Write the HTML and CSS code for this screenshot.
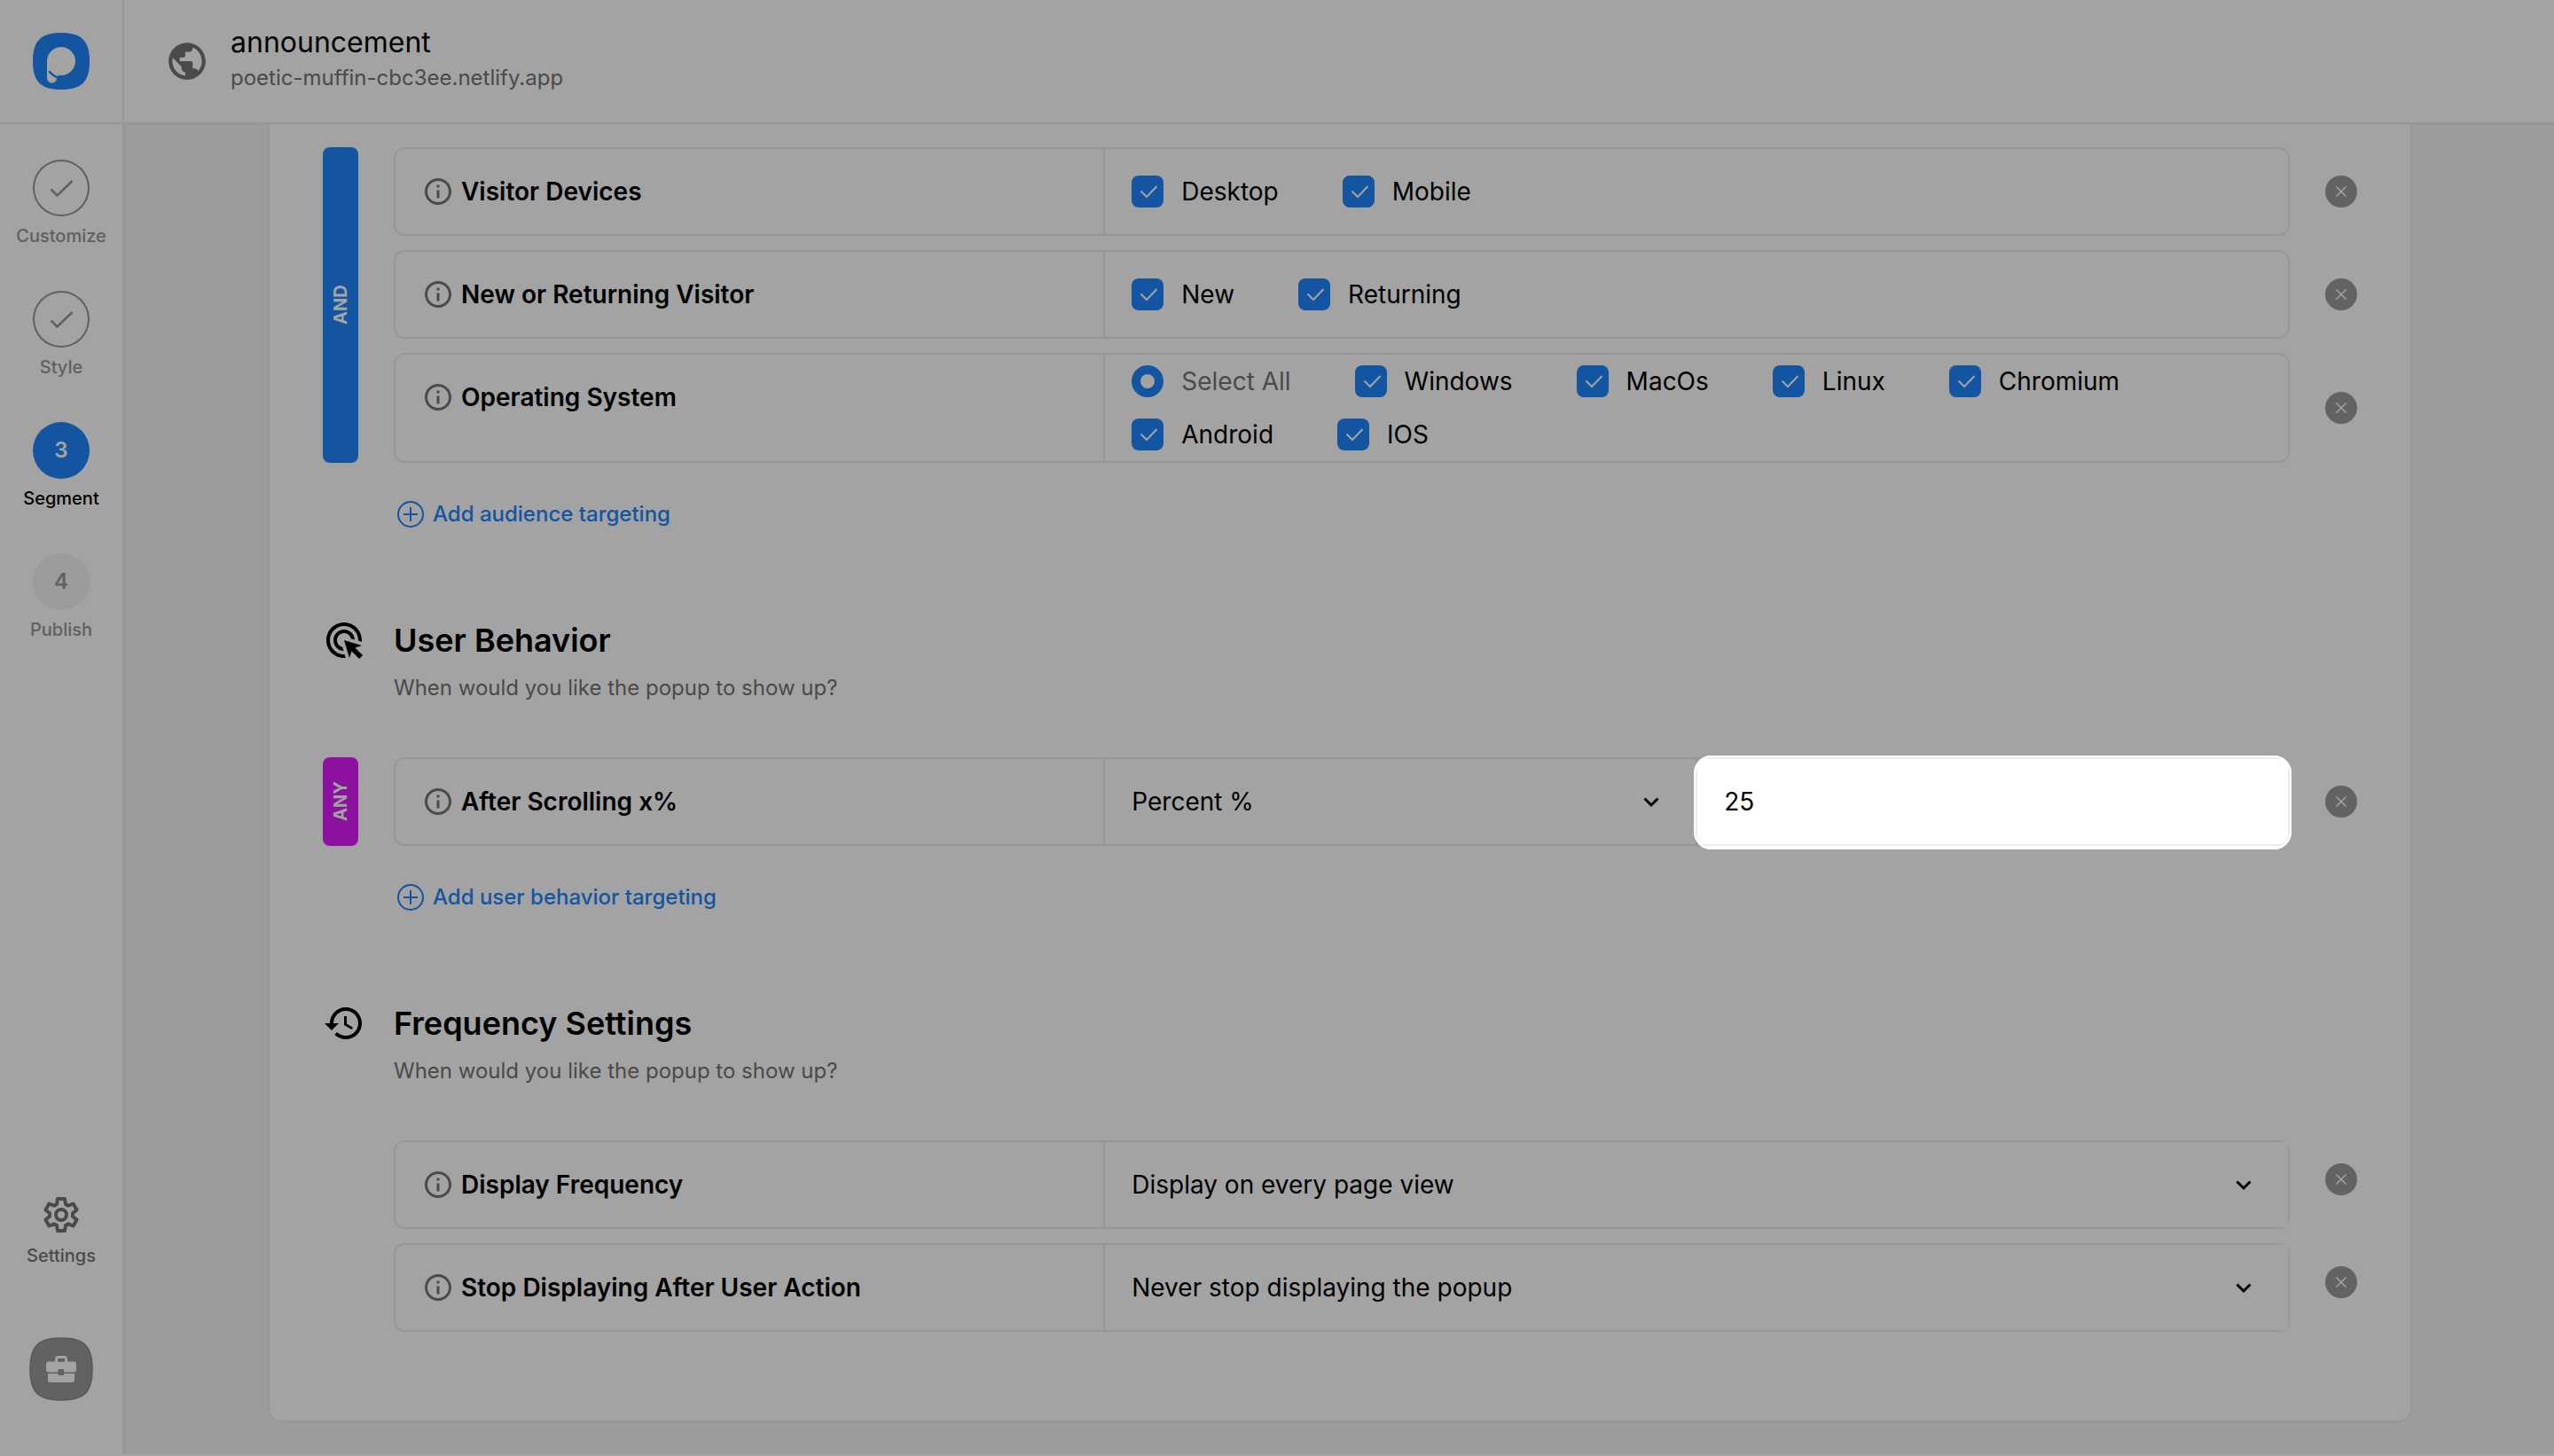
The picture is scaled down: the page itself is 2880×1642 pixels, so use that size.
FILE: index.html
```html
<!DOCTYPE html>
<html lang="en">

<head>
    <meta charset="UTF-8">
    <meta name="viewport" content="width=device-width, initial-scale=1.0">
    <title>announcement - Segment</title>
    <link rel="stylesheet" href="styles.css">
</head>

<body>
    <!-- shared icons -->
    <svg class="sprite" aria-hidden="true">
        <symbol id="info" viewBox="0 0 24 24">
            <path d="M11 7h2v2h-2zm0 4h2v6h-2zm1-9C6.48 2 2 6.48 2 12s4.48 10 10 10 10-4.48 10-10S17.52 2 12 2zm0 18c-4.41 0-8-3.59-8-8s3.59-8 8-8 8 3.59 8 8-3.59 8-8 8z" />
        </symbol>
        <symbol id="plus" viewBox="0 0 30 30">
            <path d="M15 7v16M7 15h16M15 1a14 14 0 1 0 0 28a14 14 0 1 0 0-28z" fill="none" stroke="currentColor" stroke-width="2" />
        </symbol>
        <symbol id="close" viewBox="0 0 36 36">
            <path d="M12.5 12.5l11 11M23.5 12.5l-11 11" fill="none" stroke="currentColor" stroke-width="1.5" />
        </symbol>
        <symbol id="check" viewBox="0 0 64 64">
            <path d="M20.5 33.5l7 7L44.5 24" fill="none" stroke="currentColor" stroke-width="2.5" />
        </symbol>
        <symbol id="chevron" viewBox="0 0 20 20">
            <path d="M2.500 6.500l7.500 7.500l7.500-7.500" fill="none" stroke="currentColor" stroke-width="3" />
        </symbol>
    </svg>

    <div class="app">
        <aside class="sidebar">
            <a href="#" class="logo" aria-label="Home">
                <svg viewBox="0 0 64 64" width="64" height="64">
                    <path d="M32 0C55 0 64 9 64 32S55 64 32 64S0 55 0 32S9 0 32 0z" fill="#1e85fa" />
                    <circle cx="32" cy="32" r="16" fill="#fff" />
                    <path d="M16 32V50C16 54 18 56.500 21.500 56.500C25 56.500 27 54 27 51L30 46z" fill="#fff" />
                    <path d="M19 44Q23 49 30 51" fill="none" stroke="#1e85fa" stroke-width="2.500" stroke-linecap="round" />
                </svg>
            </a>
            <nav class="steps">
                <a href="#" class="step">
                    <span class="step-circle done"><svg width="64" height="64"><use href="#check" /></svg></span>
                    Customize
                </a>
                <a href="#" class="step">
                    <span class="step-circle done"><svg width="64" height="64"><use href="#check" /></svg></span>
                    Style
                </a>
                <a href="#" class="step active">
                    <span class="step-circle">3</span>
                    Segment
                </a>
                <a href="#" class="step">
                    <span class="step-circle">4</span>
                    Publish
                </a>
            </nav>
            <div class="sidebar-bottom">
                <a href="#" class="settings">
                    <svg viewBox="-22 -22 44 44" width="44" height="44" fill="none" stroke="currentColor" stroke-width="4" stroke-linejoin="round">
                        <path d="M-5-12L-4-18H4L5-12L7.900-10.300L13.600-12.500L17.600-5.500L12.900-1.700V1.700L17.600 5.500L13.600 12.500L7.900 10.300L5 12L4 18H-4L-5 12L-7.900 10.300L-13.600 12.500L-17.600 5.500L-12.900 1.700V-1.700L-17.600-5.500L-13.600-12.500L-7.900-10.300z" />
                        <circle r="6" />
                    </svg>
                    Settings
                </a>
                <button type="button" class="toolbox" aria-label="Toolbox">
                    <svg viewBox="0 0 72 72" width="72" height="72">
                        <path d="M36 1C62 1 71 10 71 36S62 71 36 71S1 62 1 36S10 1 36 1z" fill="#999" stroke="#8a8a8a" stroke-width="1.500" />
                        <rect x="30.500" y="22.500" width="11" height="8" rx="2" fill="none" stroke="#fff" stroke-width="3" />
                        <rect x="19" y="27.500" width="34" height="12" rx="3" fill="#fff" />
                        <path d="M21 41h30v7a3 3 0 0 1-3 3h-24a3 3 0 0 1-3-3z" fill="#fff" />
                        <path d="M32.500 36h6.500v7h-6.500zM33 25h6v2.500h-6z" fill="#999" />
                    </svg>
                </button>
            </div>
        </aside>

        <div class="page">
            <header class="topbar">
                <svg viewBox="0 0 24 24" width="50" height="50" fill="#757575">
                    <path d="M12 2C6.480 2 2 6.480 2 12s4.480 10 10 10 10-4.480 10-10S17.520 2 12 2zm-1 17.930c-3.950-.490-7-3.850-7-7.930 0-.620.080-1.210.210-1.790L9 15v1c0 1.100.900 2 2 2v1.930zm6.900-2.540c-.260-.810-1-1.390-1.900-1.390h-1v-3c0-.550-.450-1-1-1H8v-2h2c.550 0 1-.450 1-1V7h2c1.100 0 2-.900 2-2v-.410c2.930 1.190 5 4.060 5 7.410 0 2.080-.800 3.970-2.100 5.390z" />
                </svg>
                <div class="site">
                    <h1>announcement</h1>
                    <p>poetic-muffin-cbc3ee.netlify.app</p>
                </div>
            </header>

            <main class="content">
                <form class="card">
                    <section>
                        <div class="rules">
                            <span class="operator and">AND</span>
                            <div class="rows">
                                <div class="row">
                                    <div class="box">
                                        <div class="name" id="devices"><svg class="info"><use href="#info" /></svg>Visitor Devices</div>
                                        <div class="options" role="group" aria-labelledby="devices">
                                            <label><input type="checkbox" checked>Desktop</label>
                                            <label><input type="checkbox" checked>Mobile</label>
                                        </div>
                                    </div>
                                    <button type="button" class="remove" aria-label="Remove"><svg><use href="#close" /></svg></button>
                                </div>
                                <div class="row">
                                    <div class="box">
                                        <div class="name" id="visitor"><svg class="info"><use href="#info" /></svg>New or Returning Visitor</div>
                                        <div class="options" role="group" aria-labelledby="visitor">
                                            <label><input type="checkbox" checked>New</label>
                                            <label><input type="checkbox" checked>Returning</label>
                                        </div>
                                    </div>
                                    <button type="button" class="remove" aria-label="Remove"><svg><use href="#close" /></svg></button>
                                </div>
                                <div class="row">
                                    <div class="box">
                                        <div class="name" id="system"><svg class="info"><use href="#info" /></svg>Operating System</div>
                                        <div class="options" role="group" aria-labelledby="system">
                                            <label class="muted"><input type="radio" checked>Select All</label>
                                            <label><input type="checkbox" checked>Windows</label>
                                            <label><input type="checkbox" checked>MacOs</label>
                                            <label><input type="checkbox" checked>Linux</label>
                                            <label><input type="checkbox" checked>Chromium</label>
                                            <label><input type="checkbox" checked>Android</label>
                                            <label><input type="checkbox" checked>IOS</label>
                                        </div>
                                    </div>
                                    <button type="button" class="remove" aria-label="Remove"><svg><use href="#close" /></svg></button>
                                </div>
                            </div>
                        </div>
                        <button type="button" class="add"><svg width="30" height="30"><use href="#plus" /></svg>Add audience targeting</button>
                    </section>

                    <section>
                        <div class="section-title">
                            <svg viewBox="0 0 24 24" width="48" height="48">
                                <path d="M11.710 17.990C8.530 17.840 6 15.220 6 12c0-3.310 2.690-6 6-6c3.220 0 5.840 2.530 5.990 5.710l-2.100-.630C15.480 9.310 13.890 8 12 8c-2.210 0-4 1.790-4 4c0 1.890 1.310 3.480 3.080 3.890L11.710 17.990zM22 12c0 .300-.010.600-.040.900l-1.970-.590C20 12.210 20 12.100 20 12c0-4.420-3.580-8-8-8s-8 3.580-8 8s3.580 8 8 8c.100 0 .210 0 .310-.010l.590 1.970C12.600 21.990 12.300 22 12 22C6.480 22 2 17.520 2 12C2 6.480 6.480 2 12 2S22 6.480 22 12zM18.230 16.260L22 15l-10-3l3 10l1.260-3.770l4.270 4.270l1.980-1.980L18.230 16.260z" />
                            </svg>
                            <h2>User Behavior</h2>
                            <p>When would you like the popup to show up?</p>
                        </div>
                        <div class="rules">
                            <span class="operator any">ANY</span>
                            <div class="rows">
                                <div class="row">
                                    <div class="box">
                                        <label class="name" for="scroll-unit"><svg class="info"><use href="#info" /></svg>After Scrolling x%</label>
                                        <div class="fields">
                                            <div class="select">
                                                <select id="scroll-unit">
                                                    <option>Percent %</option>
                                                </select>
                                                <svg class="chevron"><use href="#chevron" /></svg>
                                            </div>
                                            <div class="amount">
                                                <input type="text" value="25" aria-label="Scroll amount">
                                                <span class="spotlight"></span>
                                            </div>
                                        </div>
                                    </div>
                                    <button type="button" class="remove" aria-label="Remove"><svg><use href="#close" /></svg></button>
                                </div>
                            </div>
                        </div>
                        <button type="button" class="add"><svg width="30" height="30"><use href="#plus" /></svg>Add user behavior targeting</button>
                    </section>

                    <section>
                        <div class="section-title">
                            <svg viewBox="0 0 24 24" width="48" height="48">
                                <path d="M13 3c-4.970 0-9 4.030-9 9H1l3.890 3.890.070.140L9 12H6c0-3.870 3.130-7 7-7s7 3.130 7 7-3.130 7-7 7c-1.930 0-3.680-.790-4.940-2.060l-1.420 1.420C8.270 19.990 10.510 21 13 21c4.970 0 9-4.030 9-9s-4.030-9-9-9zm-1 5v5l4.280 2.540.720-1.210-3.500-2.080V8H12z" />
                            </svg>
                            <h2>Frequency Settings</h2>
                            <p>When would you like the popup to show up?</p>
                        </div>
                        <div class="rules">
                            <span class="operator"></span>
                            <div class="rows frequency">
                                <div class="row">
                                    <div class="box">
                                        <label class="name" for="frequency"><svg class="info"><use href="#info" /></svg>Display Frequency</label>
                                        <div class="fields">
                                            <div class="select">
                                                <select id="frequency">
                                                    <option>Display on every page view</option>
                                                </select>
                                                <svg class="chevron"><use href="#chevron" /></svg>
                                            </div>
                                        </div>
                                    </div>
                                    <button type="button" class="remove" aria-label="Remove"><svg><use href="#close" /></svg></button>
                                </div>
                                <div class="row">
                                    <div class="box">
                                        <label class="name" for="stop"><svg class="info"><use href="#info" /></svg>Stop Displaying After User Action</label>
                                        <div class="fields">
                                            <div class="select">
                                                <select id="stop">
                                                    <option>Never stop displaying the popup</option>
                                                </select>
                                                <svg class="chevron"><use href="#chevron" /></svg>
                                            </div>
                                        </div>
                                    </div>
                                    <button type="button" class="remove" aria-label="Remove"><svg><use href="#close" /></svg></button>
                                </div>
                            </div>
                        </div>
                    </section>
                </form>
            </main>
        </div>
    </div>
</body>

</html>
```

FILE: styles.css
```css
:root {
    --blue: #1e85fa;
    --magenta: #d91bf7;
    --line: #ececec;
    --gray: #757575;
    --light-gray: #969696;
}

* {
    box-sizing: border-box;
    margin: 0;
    padding: 0;
}

body {
    font-family: Inter, "Liberation Sans", sans-serif;
    font-size: 28px;
    line-height: 36px;
    color: #000;
    background: #fff;
}

a {
    color: inherit;
    text-decoration: none;
}

button {
    border: none;
    background: none;
    font: inherit;
    cursor: pointer;
}

svg {
    display: block;
    flex-shrink: 0;
}

.sprite {
    position: absolute;
    width: 0;
    height: 0;
}

.app {
    display: flex;
    min-height: 100vh;
    border-bottom: 2px solid #fff;
}

/* sidebar */
.sidebar {
    width: 140px;
    border-right: 2px solid var(--line);
    display: flex;
    flex-direction: column;
    flex-shrink: 0;
}

.logo {
    height: 140px;
    border-bottom: 2px solid var(--line);
    display: flex;
    align-items: center;
    justify-content: center;
}

.steps {
    display: flex;
    flex-direction: column;
    gap: 50px;
    padding-top: 40px;
}

.step,
.settings {
    display: flex;
    flex-direction: column;
    align-items: center;
    gap: 10px;
    font-size: 20px;
    line-height: 24px;
    font-weight: 500;
    color: var(--light-gray);
}

.step-circle {
    width: 64px;
    height: 64px;
    border-radius: 50%;
    background: #f4f4f4;
    display: flex;
    align-items: center;
    justify-content: center;
    font-size: 24px;
    font-weight: 600;
}

.step-circle.done {
    background: none;
    box-shadow: inset 0 0 0 2px var(--light-gray);
}

.step.active {
    color: #000;
}

.active .step-circle {
    background: var(--blue);
    color: #fff;
}

.sidebar-bottom {
    margin-top: auto;
    padding-bottom: 60px;
    display: flex;
    flex-direction: column;
    align-items: center;
    gap: 80px;
}

.settings {
    color: var(--gray);
    gap: 12px;
}

/* top bar */
.page {
    flex: 1;
    display: flex;
    flex-direction: column;
}

.topbar {
    height: 140px;
    border-bottom: 2px solid var(--line);
    padding-left: 46px;
    display: flex;
    align-items: center;
    gap: 24px;
}

.site {
    padding-bottom: 2px;
    line-height: 40px;
}

.topbar h1 {
    font-size: 32px;
    font-weight: 400;
}

.topbar p {
    font-size: 24px;
    color: var(--gray);
}

/* card */
.content {
    flex: 1;
    padding: 0 160px 36px;
    background: #f4f4f4;
    border-left: 2px solid var(--line);
}

.card {
    padding: 26px 60px 100px;
    background: #fff;
    border: 2px solid var(--line);
    border-top: none;
    border-radius: 0 0 16px 16px;
}

section + section {
    margin-top: 102px;
}

.section-title {
    display: grid;
    grid-template-columns: 80px 1fr;
    align-items: center;
    row-gap: 16px;
    margin-bottom: 62px;
}

.section-title svg {
    margin: -2px 0;
}

.section-title h2 {
    font-size: 36px;
    line-height: 44px;
    font-weight: 600;
}

.section-title p {
    grid-column: 2;
    font-size: 24px;
    line-height: 32px;
    color: var(--gray);
}

.rules {
    display: flex;
    gap: 40px;
}

.operator {
    width: 40px;
    border-radius: 8px;
    color: #fff;
    font-size: 20px;
    font-weight: 700;
    line-height: 40px;
    text-align: center;
    writing-mode: vertical-rl;
    transform: rotate(180deg);
}

.operator.and {
    background: var(--blue);
}

.operator.any {
    background: var(--magenta);
}

.rows {
    flex: 1;
    display: flex;
    flex-direction: column;
    gap: 16px;
}

.row {
    display: flex;
    align-items: center;
    gap: 40px;
}

.box {
    flex: 1;
    display: grid;
    grid-template-columns: 3fr 5fr;
    min-height: 100px;
    border: 2px solid var(--line);
    border-radius: 12px;
}

.name {
    display: flex;
    align-items: flex-start;
    gap: 8px;
    padding: 30px 0 30px 30px;
    border-right: 2px solid var(--line);
    font-weight: 600;
}

.info {
    width: 36px;
    height: 36px;
    fill: var(--gray);
}

.options {
    display: flex;
    flex-wrap: wrap;
    align-items: center;
    gap: 24px 72px;
    padding: 12px 30px;
}

.options label {
    display: flex;
    align-items: center;
    gap: 20px;
}

.options .muted {
    color: var(--gray);
}

.options input {
    appearance: none;
    width: 36px;
    height: 36px;
}

.options input[type="checkbox"] {
    border-radius: 8px;
    background: var(--blue) url("data:image/svg+xml,%3Csvg xmlns='http://www.w3.org/2000/svg' viewBox='0 0 36 36'%3E%3Cpath d='M10.500 17.500l6.500 6.500L28.500 12' fill='none' stroke='white' stroke-width='2'/%3E%3C/svg%3E");
}

.options input[type="radio"] {
    border: 10px solid var(--blue);
    border-radius: 50%;
}

.fields {
    display: flex;
}

.select {
    flex: 1;
    display: grid;
    align-items: center;
}

.select select,
.chevron {
    grid-area: 1 / 1;
}

.select select,
.amount input {
    appearance: none;
    width: 100%;
    height: 96px;
    padding: 0 30px;
    border: none;
    outline: none;
    background: #fff;
    color: #000;
    font: inherit;
}

.chevron {
    width: 20px;
    height: 20px;
    justify-self: end;
    margin-right: 40px;
    pointer-events: none;
}

.amount {
    position: relative;
    flex: 1;
    border-left: 2px solid var(--line);
}

.amount input {
    border-radius: 0 12px 12px 0;
}

/* dims everything around the highlighted field */
.spotlight {
    position: absolute;
    inset: -4px -4px -6px;
    border: 2px solid #fff;
    border-radius: 20px;
    box-shadow: 0 0 0 4000px rgba(0, 0, 0, 0.36);
    pointer-events: none;
    z-index: 10;
}

.remove {
    width: 36px;
    height: 36px;
    border-radius: 50%;
    background: #9b9b9b;
    color: #fff;
}

.remove svg {
    width: 36px;
    height: 36px;
}

.frequency .remove {
    margin-bottom: 12px;
}

.add {
    display: flex;
    align-items: center;
    gap: 10px;
    margin: 40px 0 0 84px;
    color: var(--blue);
    font-size: 24px;
    font-weight: 500;
}
```
